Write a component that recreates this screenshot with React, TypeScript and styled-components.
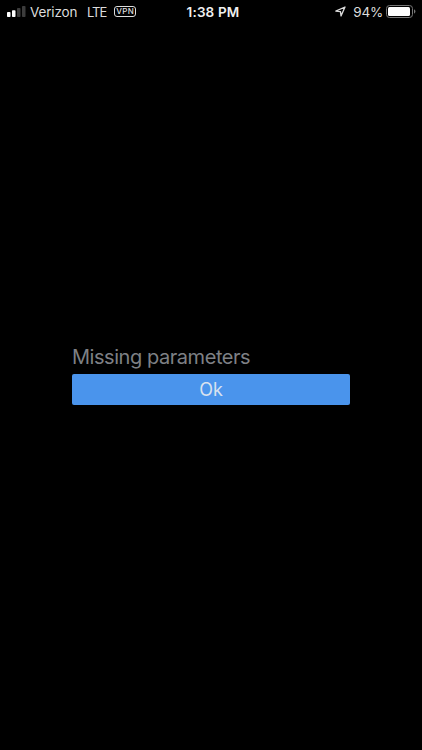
import styled, { createGlobalStyle } from "styled-components";

const GlobalStyle = createGlobalStyle`
  body {
    margin: 0;
    background: #000;
    font-family: Inter, "Liberation Sans", sans-serif;
  }
`;

const Screen = styled.div`
  height: 750px;
  display: flex;
  flex-direction: column;
  overflow: hidden;
  background: #000;
`;

const StatusBar = styled.header`
  height: 24px;
  padding: 0 5px 0 7px;
  display: grid;
  grid-template-columns: 1fr auto 1fr;
  align-items: center;
  color: #dcdcdc;
  font-size: 13.5px;
  line-height: 24px;
  white-space: nowrap;
`;

const StatusGroup = styled.div<{ $end?: boolean }>`
  display: flex;
  align-items: center;
  justify-content: ${({ $end }) => ($end ? "flex-end" : "flex-start")};

  svg {
    display: block;
    flex-shrink: 0;
    margin-bottom: 1px;
  }
`;

const Carrier = styled.span`
  width: 57px;
  margin-left: 4px;
  letter-spacing: -0.15px;
`;

const Network = styled.span`
  width: 27px;
  font-size: 13px;
  letter-spacing: -1px;
`;

const VpnBadge = styled.span`
  box-sizing: border-box;
  width: 22px;
  height: 11px;
  margin-bottom: 1px;
  border: 1px solid #dcdcdc;
  border-radius: 3px;
  font-size: 8px;
  font-weight: 500;
  line-height: 9px;
  letter-spacing: 0.4px;
  text-indent: 0.4px;
  text-align: center;
`;

const Time = styled.time`
  padding-left: 2px;
  color: #f0f0f0;
  font-weight: 600;
  letter-spacing: 0.15px;
`;

const Battery = styled.span`
  margin: 0 3px 0 7px;
  letter-spacing: -0.2px;
`;

const Content = styled.main`
  flex: 1;
  padding: 321px 72px 0;
`;

const Message = styled.p`
  margin: 0;
  color: #7e8085;
  font-size: 20px;
  line-height: 24px;
  letter-spacing: -0.45px;
`;

const Button = styled.button`
  display: block;
  width: 100%;
  height: 31px;
  margin-top: 5px;
  padding: 0;
  border: 0;
  border-radius: 2px;
  background: #4a94ec;
  color: #d8e2ef;
  font: inherit;
  font-size: 18px;
  line-height: 31px;
`;

const SignalIcon = () => (
  <svg width="19" height="13" viewBox="0 0 19 13">
    <rect x="0" y="7" width="3.5" height="5" rx="0.8" fill="#fff" />
    <rect x="5" y="5.3" width="3.5" height="6.7" rx="0.8" fill="#fff" />
    <rect x="10" y="3" width="3.5" height="9" rx="0.8" fill="#3c3c3c" />
    <rect x="15" y="1" width="3.5" height="11" rx="0.8" fill="#3c3c3c" />
  </svg>
);

const LocationIcon = () => (
  <svg width="11" height="11" viewBox="0 0 11 11">
    <path
      d="M0.8 5.1 10 1 6 10 5.5 5.6Z"
      fill="none"
      stroke="#dcdcdc"
      strokeWidth="1.3"
      strokeLinejoin="round"
    />
  </svg>
);

const BatteryIcon = () => (
  <svg width="31" height="13" viewBox="0 0 31 13">
    <rect
      x="0.5"
      y="0.5"
      width="26"
      height="12"
      rx="3"
      fill="none"
      stroke="#777"
    />
    <rect x="2" y="2" width="22" height="9" rx="1.5" fill="#fff" />
    <path d="M28 4.3Q31 6.5 28 8.7Z" fill="#777" />
  </svg>
);

const App = () => {
  return (
    <>
      <GlobalStyle />
      <Screen>
        <StatusBar>
          <StatusGroup>
            <SignalIcon />
            <Carrier>Verizon</Carrier>
            <Network>LTE</Network>
            <VpnBadge>VPN</VpnBadge>
          </StatusGroup>
          <Time>1:38 PM</Time>
          <StatusGroup $end>
            <LocationIcon />
            <Battery>94%</Battery>
            <BatteryIcon />
          </StatusGroup>
        </StatusBar>
        <Content>
          <Message>Missing parameters</Message>
          <Button type="button">Ok</Button>
        </Content>
      </Screen>
    </>
  );
};

export default App;
